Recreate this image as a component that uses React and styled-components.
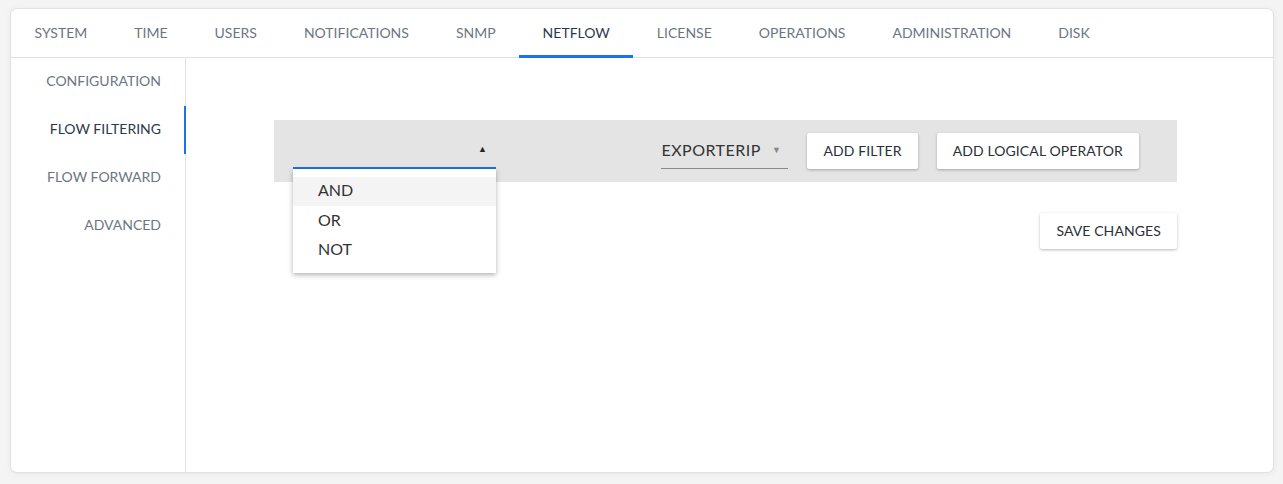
import React from 'react';
import styled, { createGlobalStyle } from 'styled-components';

const GlobalStyle = createGlobalStyle`
  html, body {
    margin: 0;
    padding: 0;
    background: #f4f4f5;
    font-family: Lato, "Open Sans", sans-serif;
  }
  body {
    padding: 8px 9px 11px 10px;
  }
`

const Card = styled.div`
  display: flex;
  flex-direction: column;
  height: 465px;
  box-sizing: border-box;
  background: #fff;
  border: 1px solid #dfe1e4;
  border-radius: 7px;
  box-shadow: 0 1px 6px rgba(0, 0, 0, 0.05);
  overflow: hidden;
`

const TabBar = styled.ul`
  display: flex;
  margin: 0;
  padding: 0;
  list-style: none;
  height: 48px;
  border-bottom: 1px solid #dfe1e4;
`

const Tab = styled.li`
  display: flex;
  align-items: center;
  padding: 0 23.5px;
  font-size: 14px;
  color: ${p => p.active ? '#2b3a4d' : '#6b7683'};
  border-bottom: ${p => p.active ? '3px solid #1a73e8' : '3px solid transparent'};
  margin-bottom: -1px;
  box-sizing: border-box;
`

const Body = styled.div`
  display: flex;
  flex: 1;
`

const Sidebar = styled.ul`
  width: 174px;
  margin: 0;
  padding: 0;
  list-style: none;
  border-right: 1px solid #dfe1e4;
`

const SideItem = styled.li`
  height: 48px;
  box-sizing: border-box;
  display: flex;
  align-items: center;
  justify-content: flex-end;
  padding: 0 23px 3px 0;
  font-size: 14px;
  color: ${p => p.active ? '#2b3a4d' : '#6b7683'};
  border-right: ${p => p.active ? '2px solid #1a73e8' : '2px solid transparent'};
  margin-right: -1px;
`

const Content = styled.div`
  flex: 1;
  padding: 62px 96px 0 88px;
`

const FilterBar = styled.div`
  display: flex;
  align-items: center;
  height: 62px;
  padding: 0 38px 0 19px;
  background: #e4e4e4;
`

const SelectWrap = styled.div`
  position: relative;
  width: ${p => p.width}px;
  height: 35px;
`

const SelectBox = styled.div`
  display: flex;
  align-items: center;
  justify-content: space-between;
  height: 100%;
  box-sizing: border-box;
  padding: 0 ${p => p.arrowPad}px 3px 0;
  border-bottom: ${p => p.focused ? '2px solid #1a73e8' : '1px solid #8a8a8a'};
  font-size: 16px;
  letter-spacing: ${p => p.spread ? '0.5px' : '0'};
  color: #333;
`

const Arrow = styled.span`
  font-size: 9px;
  color: ${p => p.dark ? '#222' : '#888'};
`

const Menu = styled.ul`
  position: absolute;
  top: 35px;
  left: 0;
  right: 0;
  margin: 0;
  padding: 8px 0;
  list-style: none;
  background: #fff;
  box-shadow: 0 2px 5px rgba(0, 0, 0, 0.3);
  z-index: 2;
`

const MenuItem = styled.li`
  height: 29.5px;
  box-sizing: border-box;
  display: flex;
  align-items: center;
  padding: 0 0 3px 25px;
  font-size: 16px;
  color: #333;
  background: ${p => p.hover ? '#f4f4f4' : 'transparent'};
`

const RightGroup = styled.div`
  display: flex;
  align-items: center;
  gap: 19px;
  margin-left: auto;
`

const Button = styled.button`
  height: 36px;
  padding: 0 16px 2px;
  border: none;
  border-radius: 2px;
  background: #fff;
  box-shadow: 0 1px 3px rgba(0, 0, 0, 0.28);
  font-family: Lato, "Open Sans", sans-serif;
  font-size: 14px;
  letter-spacing: 0.1px;
  color: #2b2f36;
  cursor: pointer;
`

const SaveRow = styled.div`
  display: flex;
  justify-content: flex-end;
  margin-top: 31px;
`

const tabs = ['SYSTEM', 'TIME', 'USERS', 'NOTIFICATIONS', 'SNMP', 'NETFLOW', 'LICENSE', 'OPERATIONS', 'ADMINISTRATION', 'DISK'];
const sections = ['CONFIGURATION', 'FLOW FILTERING', 'FLOW FORWARD', 'ADVANCED'];

export default function App() {
  return (
    <>
      <GlobalStyle />
      <Card>
        <TabBar>
          {tabs.map(t => <Tab key={t} active={t === 'NETFLOW'}>{t}</Tab>)}
        </TabBar>
        <Body>
          <Sidebar>
            {sections.map(s => <SideItem key={s} active={s === 'FLOW FILTERING'}>{s}</SideItem>)}
          </Sidebar>
          <Content>
            <FilterBar>
              <SelectWrap width={203}>
                <SelectBox focused arrowPad={9}>
                  <span />
                  <Arrow dark>▲</Arrow>
                </SelectBox>
                <Menu>
                  <MenuItem hover>AND</MenuItem>
                  <MenuItem>OR</MenuItem>
                  <MenuItem>NOT</MenuItem>
                </Menu>
              </SelectWrap>
              <RightGroup>
                <SelectWrap width={127}>
                  <SelectBox arrowPad={7} spread>
                    <span>EXPORTERIP</span>
                    <Arrow>▼</Arrow>
                  </SelectBox>
                </SelectWrap>
                <Button>ADD FILTER</Button>
                <Button>ADD LOGICAL OPERATOR</Button>
              </RightGroup>
            </FilterBar>
            <SaveRow>
              <Button>SAVE CHANGES</Button>
            </SaveRow>
          </Content>
        </Body>
      </Card>
    </>
  );
}
